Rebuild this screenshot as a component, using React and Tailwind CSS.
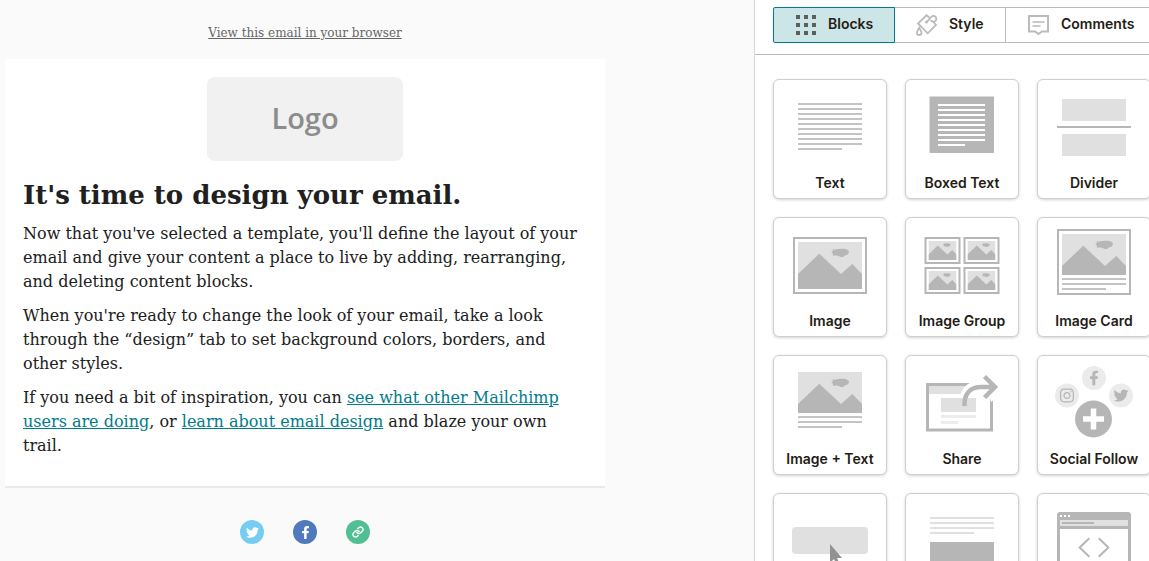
import React from "react";
import { FaFacebookF, FaInstagram, FaTwitter } from "react-icons/fa";
import { Link as LinkIcon } from "lucide-react";

const DARK = "#b6b6b6";
const LINE = "#c4c4c4";
const LIGHT = "#e0e0e0";

function Lines({ x = 24, y, width = 64, count, last = 44, fill = LINE }) {
  return Array.from({ length: count }, (_, i) => (
    <rect key={i} x={x} y={y + i * 5} width={i === count - 1 ? last : width} height="2" fill={fill} />
  ));
}

function Scene({ x, y, width = 64, height = 41, view = "0 0 64 41" }) {
  return (
    <svg x={x} y={y} width={width} height={height} viewBox={view} preserveAspectRatio="none">
      <rect width="64" height="60" fill={LIGHT} />
      <path d="M0 32 21.3 11.7 43 32 54.3 22 64 32V60H0Z" fill={DARK} />
      <path
        d="M33.3 10.500 35 9 34.600 7.200l2 .6C39 7 42 6.800 44.500 6.800c3.800.1 6.500 1.400 6.500 3.300 0 1.900-2.300 3.300-5 3.700l-.5 1.200h-3.500l-.8-1.100c-1.400 0-2.700-.1-4-.4L34.700 13.700l.3-2Z"
        fill={DARK}
      />
    </svg>
  );
}

function Frame({ x, y, width, height }) {
  return <rect x={x + 1} y={y + 1} width={width - 2} height={height - 2} fill="#fff" stroke={DARK} strokeWidth="2" />;
}

const blocks = [
  { label: "Text", art: <Lines y={23} count={10} /> },
  {
    label: "Boxed Text",
    art: (
      <>
        <rect x="23.500" y="16.500" width="64.500" height="56.500" fill={DARK} />
        <Lines x={32} y={24} width={47} count={9} last={27} fill="#fff" />
      </>
    ),
  },
  {
    label: "Divider",
    art: (
      <>
        <rect x="24" y="19" width="64" height="22" fill={LIGHT} />
        <rect x="19" y="46" width="74" height="2" fill={DARK} />
        <rect x="24" y="54" width="64" height="22" fill={LIGHT} />
      </>
    ),
  },
  {
    label: "Image",
    art: (
      <>
        <Frame x={19} y={19} width={74} height={57} />
        <Scene x={24} y={24} height={47} view="0 0 64 47" />
      </>
    ),
  },
  {
    label: "Image Group",
    art: [
      [18.5, 19],
      [57.5, 19],
      [18.5, 49],
      [57.5, 49],
    ].map(([x, y]) => (
      <g key={`${x}-${y}`}>
        <Frame x={x} y={y} width={36} height={27} />
        <Scene x={x + 4} y={y + 4} width={28} height={19} view="0 2 64 42" />
      </g>
    )),
  },
  {
    label: "Image Card",
    art: (
      <>
        <Frame x={19} y={11} width={74} height={66} />
        <Scene x={24} y={16} />
        <Lines y={60} count={3} />
      </>
    ),
  },
  {
    label: "Image + Text",
    art: (
      <>
        <Scene x={24} y={16} />
        <Lines y={60} count={3} />
      </>
    ),
  },
  {
    label: "Share",
    art: (
      <>
        <rect x="21.500" y="28.500" width="64" height="45.500" fill="#fff" stroke={DARK} strokeWidth="3" />
        <rect x="23" y="30" width="61" height="8" fill={LIGHT} />
        <rect x="35" y="42" width="35" height="14" fill={LIGHT} />
        <rect x="35" y="59" width="35" height="3" fill="#ececec" />
        <rect x="35" y="65" width="17" height="3" fill="#ececec" />
        <path d="M66 26h29v14l-10 6-1-4V38H54.500c2-5 5-9.500 11.500-12Z" fill="#fff" />
        <path d="M58.500 50C58 38 64 31 75 31h13M78.500 20.500 89 31 78.500 41.500" fill="none" stroke={DARK} strokeWidth="4.500" />
      </>
    ),
  },
  {
    label: "Social Follow",
    art: (
      <>
        <circle cx="56" cy="22" r="12" fill="#ebebeb" />
        <circle cx="29" cy="39.500" r="12" fill="#ebebeb" />
        <circle cx="83" cy="39.500" r="12" fill="#ebebeb" />
        <FaFacebookF x={48.5} y={14.5} size={15} color={DARK} />
        <FaInstagram x={21} y={31.5} size={16} color={DARK} />
        <FaTwitter x={75.5} y={32} size={15} color={DARK} />
        <circle cx="55.500" cy="63" r="18.500" fill={DARK} />
        <path d="M55.500 52.500v21M45 63h21" stroke="#fff" strokeWidth="5.500" />
      </>
    ),
  },
  {
    label: "Button",
    art: (
      <>
        <rect x="18" y="33" width="76" height="27" rx="4" fill={LIGHT} />
        <path d="M56 50v19l4-4 3 7 3-1.500-3-6.500h5Z" fill="#929292" />
      </>
    ),
  },
  {
    label: "Footer",
    art: (
      <>
        <Lines y={23} count={4} fill={LIGHT} />
        <rect x="24" y="48" width="64" height="28" fill={DARK} />
      </>
    ),
  },
  {
    label: "Code",
    art: (
      <>
        <rect x="19" y="18" width="74" height="60" rx="3" fill={DARK} />
        <path d="M22 21h2v2h-2zM26 21h2v2h-2zM30 21h2v2h-2z" fill="#fff" />
        <rect x="22" y="26" width="68" height="6" fill={LIGHT} />
        <rect x="24" y="28" width="32" height="2" fill={DARK} />
        <rect x="22" y="35" width="68" height="40" fill="#fff" />
        <path d="m51.300 44.300-9.600 9.200 9.600 9.200M60.700 44.300l9.600 9.200-9.600 9.200" fill="none" stroke={DARK} strokeWidth="2" />
      </>
    ),
  },
];

function GridIcon() {
  return (
    <svg width="22" height="22" viewBox="0 0 22 22" fill="#5c5f5a" aria-hidden="true">
      {[1, 9, 17].map((y) => [0, 8, 16].map((x) => <rect key={`${x}-${y}`} x={x} y={y} width="4" height="4" />))}
    </svg>
  );
}

function PaintIcon() {
  return (
    <svg width="22" height="22" viewBox="0 0 22 22" fill="none" stroke="#bdbbb9" strokeWidth="1.800" aria-hidden="true">
      <path d="M14 4 10.500 1.300 2 9.500l9.700 9.800L20 11l-3.500-4" />
      <path d="M10.500 8.300 15.200 3a2.900 2.900 0 1 1 3.800 4.300c-1.300 1-3 .3-4.500-1" />
      <circle cx="10.500" cy="8" r="1.600" fill="#bdbbb9" stroke="none" />
      <path d="M3.200 13.800C2 16 .9 17.200.9 18.700a2.300 2.300 0 0 0 4.600 0c0-1.500-1.100-2.700-2.300-4.900Z" />
    </svg>
  );
}

function CommentIcon() {
  return (
    <svg width="22" height="22" viewBox="0 0 22 22" fill="none" stroke="#bdbbb9" strokeWidth="2" aria-hidden="true">
      <path d="M1 2h19v15.500h-6L10.500 20 7 17.500H1Z" />
      <path d="M4.500 8h12M4.500 12h8" strokeWidth="1.500" />
    </svg>
  );
}

function EmailPreview() {
  return (
    <main className="min-w-0 flex-1 bg-[#fafafa] pl-[5px] font-['DejaVu_Serif',serif] text-[#202020]">
      <div className="max-w-[600px]">
        <div className="pt-6 pb-[17px] text-center text-xs leading-[18px]">
          <a href="#browser" className="text-[#656565] underline">View this email in your browser</a>
        </div>
        <article className="border-b-2 border-[#eaeaea] bg-white px-[18px] pt-[18px] pb-7">
          <div className="mx-auto flex h-[84px] w-[196px] items-center justify-center rounded-lg bg-[#f1f1f1] pb-[2px] font-['Open_Sans',sans-serif] text-[29px] font-semibold text-[#8c8c8c]">
            Logo
          </div>
          <h1 className="mt-[18px] text-[26px] leading-8 font-bold">It's time to design your email.</h1>
          <div className="flex flex-col gap-[10px] pt-[11px] text-base leading-6">
            <p>
              Now that you've selected a template, you'll define the layout of your email and give your content a place to live by adding, rearranging, and deleting content blocks.
            </p>
            <p>
              When you're ready to change the look of your email, take a look through the “design” tab to set background colors, borders, and other styles.
            </p>
            <p>
              If you need a bit of inspiration, you can{" "}
              <a href="#inspiration" className="text-[#007c89] underline">see what other Mailchimp users are doing</a>, or{" "}
              <a href="#design" className="text-[#007c89] underline">learn about email design</a> and blaze your own trail.
            </p>
          </div>
        </article>
        <footer className="flex justify-center gap-[29px] pt-8">
          <a href="#twitter" aria-label="Twitter" className="flex size-6 items-center justify-center rounded-full bg-[#76cdf2] text-white">
            <FaTwitter size={13} />
          </a>
          <a href="#facebook" aria-label="Facebook" className="flex size-6 items-center justify-center rounded-full bg-[#5079be] text-white">
            <FaFacebookF size={13} />
          </a>
          <a href="#link" aria-label="Website" className="flex size-6 items-center justify-center rounded-full bg-[#52be94] text-white">
            <LinkIcon size={12} strokeWidth={2.8} />
          </a>
        </footer>
      </div>
    </main>
  );
}

function BlockPanel() {
  const tab = "flex shrink-0 items-center gap-[11px] border-y border-r border-[#bdbbb9]";
  return (
    <aside className="w-[395px] shrink-0 overflow-hidden border-l border-[#d8d8d8] bg-white font-[Inter,sans-serif] text-sm font-semibold text-[#241c15]">
      <nav className="flex border-b border-[#bdbbb9] pt-[7px] pb-[11px] pl-[18px]">
        <button className="flex h-9 w-[122px] shrink-0 items-center gap-[10px] rounded-l-xs border border-[#007c89] bg-[#cce5e7] pl-[22px]">
          <GridIcon />
          <span className="pb-[2px]">Blocks</span>
        </button>
        <button className={`${tab} w-[111px] pl-[21px]`}>
          <PaintIcon />
          <span className="pb-[2px]">Style</span>
        </button>
        <button className={`${tab} w-40 pl-[22px]`}>
          <CommentIcon />
          <span className="pb-[2px]">Comments</span>
        </button>
      </nav>
      <div className="grid grid-cols-[repeat(3,114px)] gap-[18px] pt-6 pl-[18px]">
        {blocks.map(({ label, art }) => (
          <button key={label} className="flex h-[120px] flex-col items-center rounded-md border border-[#cfcfcf] bg-white shadow-[0_1px_3px_rgba(0,0,0,0.18)]">
            <svg width="112" height="93" viewBox="0 0 112 93" className="shrink-0" aria-hidden="true">
              {art}
            </svg>
            <span className="leading-5 whitespace-nowrap">{label}</span>
          </button>
        ))}
      </div>
    </aside>
  );
}

export default function App() {
  return (
    <div className="flex h-screen overflow-hidden">
      <EmailPreview />
      <BlockPanel />
    </div>
  );
}
